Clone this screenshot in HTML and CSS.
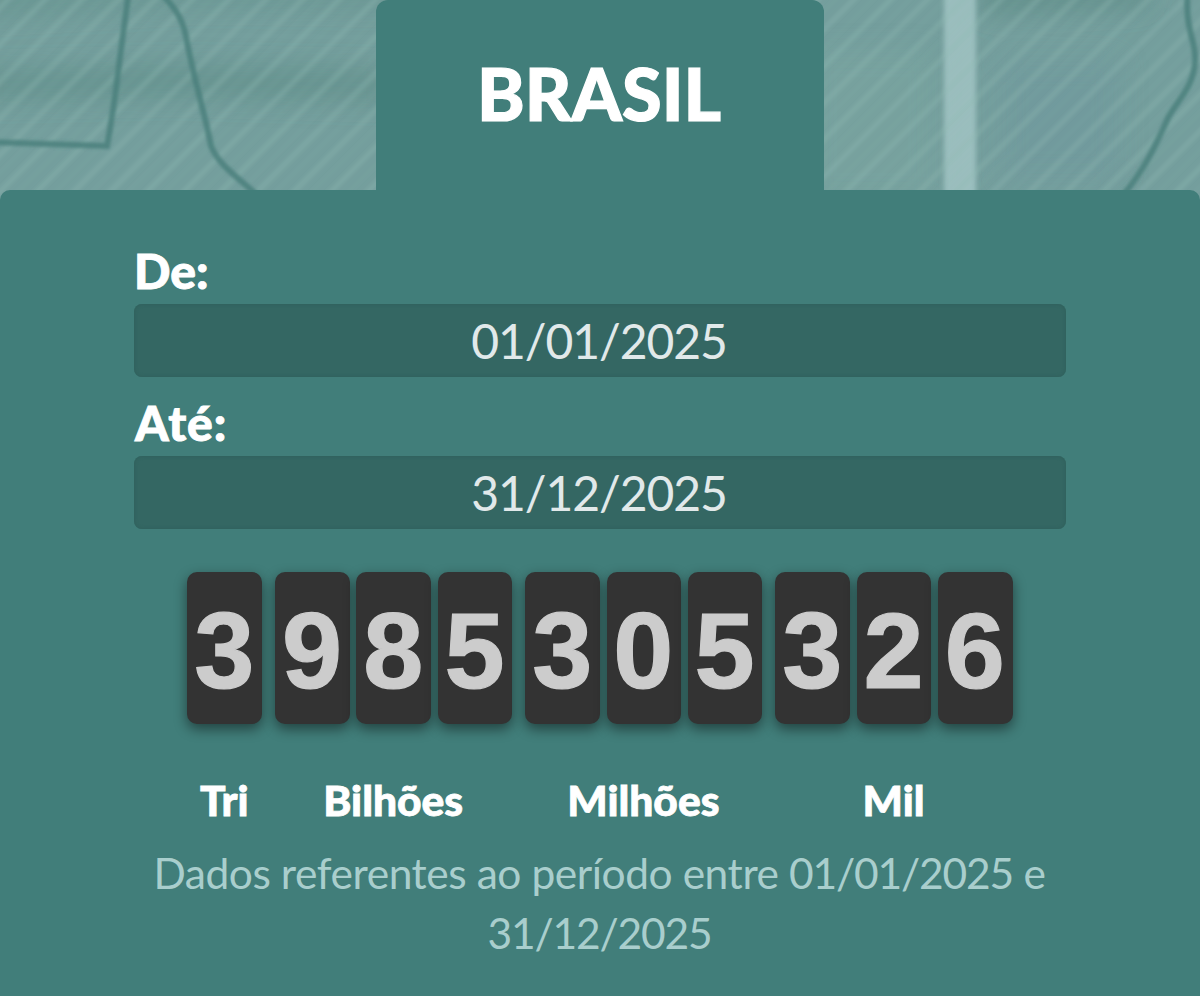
FILE: index.html
```html
<!DOCTYPE html>
<html lang="pt-BR">
<head>
<meta charset="utf-8">
<title>Brasil</title>
<link rel="stylesheet" href="styles.css">
</head>
<body>
<div class="page">
  <header class="hero">
    <svg class="hero-art" viewBox="0 0 1200 200" aria-hidden="true">
      <defs>
        <pattern id="stripes" width="26" height="26" patternUnits="userSpaceOnUse" patternTransform="rotate(45)">
          <rect x="3" width="5" height="26" fill="#90bab4" opacity=".38"/>
          <rect x="16" width="5" height="26" fill="#90bab4" opacity=".1"/>
        </pattern>
        <filter id="stripe-soft" x="-5%" y="-5%" width="110%" height="110%"><feGaussianBlur stdDeviation="2"/></filter>
        <filter id="soft" x="-5%" y="-5%" width="110%" height="110%"><feGaussianBlur stdDeviation="1.4"/></filter>
        <filter id="haze" x="-50%" y="-50%" width="200%" height="200%"><feGaussianBlur stdDeviation="12"/></filter>
        <filter id="edge" x="-50%" y="-5%" width="200%" height="110%"><feGaussianBlur stdDeviation="2.5 0"/></filter>
      </defs>
      <rect width="1200" height="200" fill="#749e9d"/>
      <g filter="url(#haze)">
        <path d="M-20 70 180 65 390 68v35l-220-6-190 4z" fill="#5a8984" opacity=".5"/>
        <path d="M-20-15h420V8L200 5-20 18z" fill="#5d8d88" opacity=".45"/>
        <path d="M980-20h170v28l-170 8z" fill="#55857f" opacity=".5"/>
        <path d="M810 50h125v150H810z" fill="#7eaaa3" opacity=".3"/>
        <path d="M1000 60h120v120h-120z" fill="#70989d" opacity=".7"/>
      </g>
      <rect x="944" y="-10" width="32" height="220" fill="#a9caca" opacity=".74" filter="url(#edge)"/>
      <g filter="url(#stripe-soft)"><rect x="-20" y="-20" width="1240" height="240" fill="url(#stripes)"/></g>
      <g filter="url(#soft)" fill="none" stroke="#4b807d" stroke-width="6" opacity=".85">
        <path d="M-10 142 107 146Q114 108 119 65L129-10"/>
        <path d="M158-10C180 12 184 24 187 42C197 92 206 118 211 146C218 164 236 176 256 194"/>
        <path d="M1188-10C1184 32 1197 40 1195 62C1194 86 1177 101 1168 118C1156 145 1144 170 1124 194"/>
      </g>
    </svg>
    <h1 class="tab">BRASIL</h1>
  </header>
  <main class="panel">
    <div class="period">
      <label class="field-label" for="from">De:</label>
      <div class="field" id="from">01/01/2025</div>
      <label class="field-label field-label-wide" for="to">Até:</label>
      <div class="field" id="to">31/12/2025</div>
    </div>
    <div class="counter">
      <section class="group"><div class="digits"><span class="digit">3</span></div><div class="unit">Tri</div></section>
      <section class="group"><div class="digits"><span class="digit">9</span><span class="digit">8</span><span class="digit">5</span></div><div class="unit">Bilhões</div></section>
      <section class="group"><div class="digits"><span class="digit">3</span><span class="digit">0</span><span class="digit">5</span></div><div class="unit">Milhões</div></section>
      <section class="group"><div class="digits"><span class="digit">3</span><span class="digit">2</span><span class="digit">6</span></div><div class="unit">Mil</div></section>
    </div>
    <p class="note">Dados referentes ao período entre <span class="date">01/01/2025</span> e <span class="date">31/12/2025</span></p>
  </main>
</div>
</body>
</html>
```
FILE: styles.css
```css
* { box-sizing: border-box; }
body { margin: 0; background: #417e7a; font-family: Lato, sans-serif; }
.page { width: 1200px; height: 996px; overflow: hidden; }
.hero { position: relative; height: 190px; display: flex; justify-content: center; }
/* artwork sits behind the tab and the panel's rounded corners */
.hero-art { position: absolute; left: 0; top: 0; width: 1200px; height: 200px; }
.tab {
  position: relative; width: 448px; height: 190px; margin: 0; padding-right: 2px;
  border-radius: 12px 12px 0 0; background: #417e7a; color: #fff;
  font-size: 72px; line-height: 187px; font-weight: 900; text-align: center;
  -webkit-text-stroke: 1.2px #fff;
}
.panel {
  position: relative; height: 806px; padding: 54px 134px 0;
  border-radius: 10px 10px 0 0; background: #417e7a;
}
.field-label {
  display: block; height: 60px; line-height: 54px;
  font-size: 48px; font-weight: 900; color: #fff; -webkit-text-stroke: .9px #fff;
}
.field-label-wide { padding-left: 1px; letter-spacing: 1px; }
.field {
  height: 73px; margin-bottom: 19px; padding-right: 2px; border-radius: 8px;
  background: #346763; box-shadow: inset 0 0 3px 1px #31625e;
  color: #e1e9ea; font-size: 48px; line-height: 73px; letter-spacing: -1.05px; text-align: center;
}
.counter { display: flex; justify-content: center; gap: 13px; padding-top: 24px; }
.digits { display: flex; gap: 6.4px; }
.digit {
  width: 74.8px; height: 152px; border-radius: 10px; background: #333;
  box-shadow: 0 5px 13px rgba(0, 0, 0, .48);
  color: #ccc; font: bold 108px/158px "Liberation Sans", Arial, sans-serif; text-align: center;
  -webkit-text-stroke: 1.2px #ccc; text-indent: -1px;
}
.unit {
  margin-top: 50px; padding-right: 1px; font-size: 42.5px; line-height: 51px; font-weight: 900; color: #fff;
  text-align: center; -webkit-text-stroke: .8px #fff;
}
.note { margin: 18px 0 0; padding-right: 1px; font-size: 42.5px; line-height: 60px; letter-spacing: -.45px; color: #a9cecd; text-align: center; }
.date { letter-spacing: -1.15px; white-space: nowrap; }
```
